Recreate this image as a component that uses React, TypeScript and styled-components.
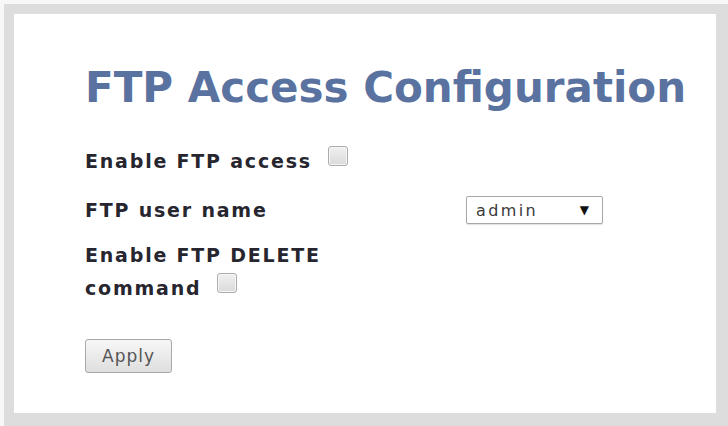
import React from "react";
import styled, { createGlobalStyle } from "styled-components";

const Global = createGlobalStyle`
  html, body { margin: 0; padding: 0; background: #ffffff; }
  body { font-family: "DejaVu Sans", Verdana, sans-serif; }
  #root { width: 728px; height: 426px; }
`;

const Page = styled.div`
  box-sizing: border-box;
  width: 728px;
  height: 426px;
  padding: 4px 0 0 4px;
  background: #f7f7f7;
`;

const Frame = styled.div`
  box-sizing: border-box;
  width: 724px;
  height: 422px;
  border-style: solid;
  border-color: #dddddd;
  border-width: 10px 12px 13px 10px;
  background: #ffffff;
  padding: 49px 0 0 71px;
`;

const Title = styled.h1`
  margin: 0;
  font-family: "DejaVu Sans", Verdana, sans-serif;
  font-weight: bold;
  font-size: 42px;
  line-height: 50px;
  color: #5a72a0;
`;

const Form = styled.div`
  margin-top: 33px;
  display: flex;
  flex-direction: column;
`;

const Row = styled.div<{ $mt?: number }>`
  display: flex;
  align-items: center;
  margin-top: ${(p) => p.$mt ?? 0}px;
`;

const Label = styled.div<{ $w?: number; $lh?: number }>`
  font-family: "DejaVu Sans", Verdana, sans-serif;
  font-weight: bold;
  font-size: 19px;
  letter-spacing: 1.8px;
  line-height: ${(p) => p.$lh ?? 24}px;
  color: #27262f;
  width: ${(p) => (p.$w ? `${p.$w}px` : "auto")};
`;

const Check = styled.span`
  display: inline-block;
  box-sizing: border-box;
  width: 20px;
  height: 20px;
  margin: 0 0 2px 16px;
  vertical-align: baseline;
  border: 1px solid #ababab;
  border-radius: 3px;
  background: linear-gradient(#f0f0f0, #dadada);
  box-shadow: inset 0 0 0 1px #f7f7f7;
`;

const Select = styled.div`
  box-sizing: border-box;
  width: 137px;
  height: 28px;
  border: 1px solid #a8a8a8;
  border-radius: 2px;
  background: #ffffff;
  box-shadow: 0 1px 1px rgba(0, 0, 0, 0.12);
  display: flex;
  align-items: center;
  justify-content: space-between;
  padding: 0 13px 0 9px;
  font-family: "DejaVu Sans", Verdana, sans-serif;
  font-size: 16px;
  letter-spacing: 2.4px;
  color: #3a3a3a;
`;

const Arrow = styled.span`
  font-size: 12px;
  letter-spacing: 0;
  color: #111111;
`;

const Button = styled.button`
  margin-top: 34px;
  align-self: flex-start;
  box-sizing: border-box;
  width: 87px;
  height: 34px;
  border: 1px solid #a9a9a9;
  border-radius: 3px;
  background: linear-gradient(#f7f7f7, #dedede);
  font-family: "DejaVu Sans", Verdana, sans-serif;
  font-size: 17px;
  letter-spacing: 1px;
  color: #555555;
  padding: 0;
`;

export default function App() {
  return (
    <>
      <Global />
      <Page>
        <Frame>
          <Title>FTP Access Configuration</Title>
          <Form>
            <Row>
              <Label>
                Enable FTP access
                <Check />
              </Label>
            </Row>
            <Row $mt={23}>
              <Label $w={381}>FTP user name</Label>
              <Select>
                <span>admin</span>
                <Arrow>▼</Arrow>
              </Select>
            </Row>
            <Row $mt={15}>
              <Label $w={300} $lh={33}>
                Enable FTP DELETE command
                <Check />
              </Label>
            </Row>
            <Button>Apply</Button>
          </Form>
        </Frame>
      </Page>
    </>
  );
}
